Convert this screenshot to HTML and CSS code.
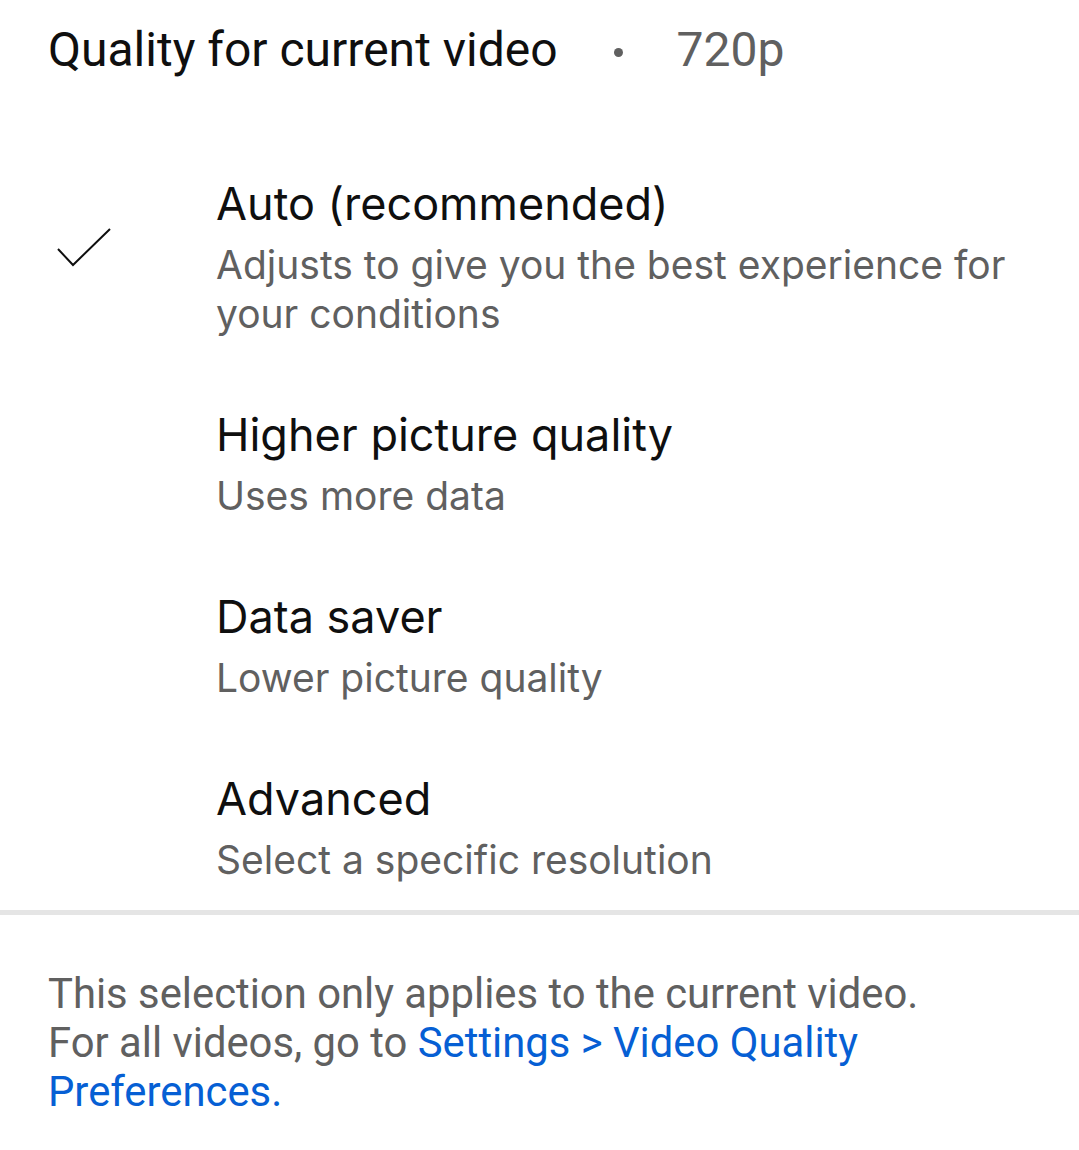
FILE: index.html
```html
<!DOCTYPE html>
<html>
<head>
<meta charset="utf-8">
<link rel="stylesheet" href="styles.css">
</head>
<body>
<div class="sheet">
  <header class="head">
    <span class="head-title">Quality for current video</span>
    <span class="head-dot"></span>
    <span class="head-value">720p</span>
  </header>
  <ul class="options">
    <li class="option">
      <div class="check">
        <svg class="check-icon" width="56" height="40" viewBox="0 0 56 40"><path d="M2 21 L17 37 L54 1" fill="none" stroke="#0f0f0f" stroke-width="2"/></svg>
      </div>
      <div class="text">
        <div class="title">Auto (recommended)</div>
        <div class="sub">Adjusts to give you the best experience for your conditions</div>
      </div>
    </li>
    <li class="option">
      <div class="check"></div>
      <div class="text">
        <div class="title">Higher picture quality</div>
        <div class="sub">Uses more data</div>
      </div>
    </li>
    <li class="option">
      <div class="check"></div>
      <div class="text">
        <div class="title">Data saver</div>
        <div class="sub">Lower picture quality</div>
      </div>
    </li>
    <li class="option">
      <div class="check"></div>
      <div class="text">
        <div class="title">Advanced</div>
        <div class="sub">Select a specific resolution</div>
      </div>
    </li>
  </ul>
  <div class="divider"></div>
  <p class="note">This selection only applies to the current video.<br>For all videos, go to <span class="link">Settings &gt; Video Quality Preferences.</span></p>
</div>
</body>
</html>
```
FILE: styles.css
```css
html, body {
  margin: 0;
  padding: 0;
  background: #ffffff;
}
body {
  font-family: Roboto, "Noto Sans", sans-serif;
  color: #0f0f0f;
}
.sheet {
  width: 1079px;
}
.head {
  display: flex;
  padding: 22px 0 0 48px;
  height: 98px;
  box-sizing: border-box;
  align-items: flex-start;
  font-size: 48px;
  line-height: 56px;
}
.head-title {
  color: #0f0f0f;
}
.head-dot {
  width: 9px;
  height: 9px;
  border-radius: 50%;
  background: #606060;
  margin: 26px 0 0 56px;
}
.head-value {
  color: #606060;
  margin-left: 54px;
}
.options {
  list-style: none;
  margin: 0;
  padding: 76px 0 26px 0;
  display: flex;
  flex-direction: column;
  gap: 67px;
}
.option {
  display: flex;
  align-items: flex-start;
}
.check {
  width: 216px;
  padding-left: 56px;
  box-sizing: border-box;
  flex: none;
}
.check-icon {
  display: block;
  margin-top: 54px;
}
.text {
  flex: 1;
  padding-right: 30px;
  font-family: Inter, "Noto Sans", sans-serif;
}
.title {
  font-size: 45px;
  line-height: 60px;
  color: #0f0f0f;
}
.sub {
  margin-top: 6px;
  font-size: 39px;
  line-height: 49px;
  color: #606060;
}
.divider {
  height: 5px;
  background: #e5e5e5;
}
.note {
  margin: 54px 0 0 0;
  padding: 0 100px 0 48px;
  font-size: 41.8px;
  line-height: 49px;
  color: #606060;
}
.link {
  color: #065fd4;
}
```
